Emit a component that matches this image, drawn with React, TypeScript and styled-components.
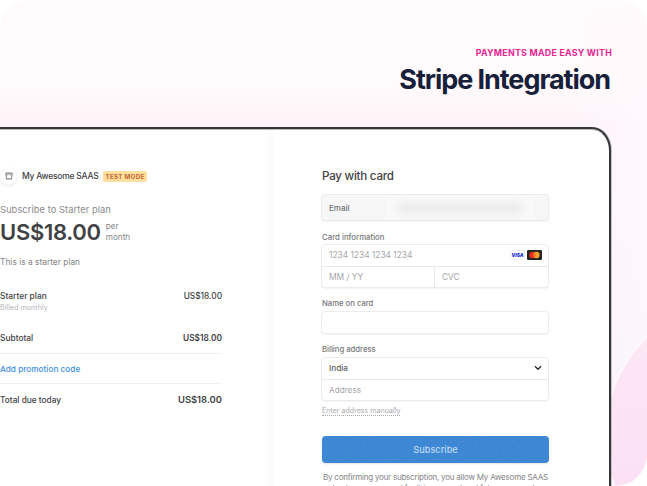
import React from "react";
import styled, { createGlobalStyle } from "styled-components";

const GlobalStyle = createGlobalStyle`
  * { box-sizing: border-box; }
  body { margin: 0; background: #fff; font-family: Inter, "Liberation Sans", sans-serif; }
`;

const Poster = styled.main`
  position: relative;
  width: 647px;
  height: 486px;
  overflow: hidden;
  border-radius: 28px 28px 32px 0;
  background:
    linear-gradient(90deg, rgba(255, 250, 253, 0) 88%, rgba(255, 249, 253, 0.75) 100%),
    linear-gradient(180deg, #fffbfc 0, #fffafc 85px, #fdf3f8 126px, #fcf4fa 220px, #f6f1fa 340px, #f5effa 486px);
`;

const Backdrop = styled.svg`
  position: absolute;
  inset: 0;
`;

const Heading = styled.header`
  position: relative;
  height: 127px;
  padding: 46px 35px 0 0;
  display: flex;
  flex-direction: column;
  align-items: flex-end;
`;

const Eyebrow = styled.p`
  margin: 0;
  height: 14px;
  font-size: 8.8px;
  line-height: 14px;
  font-weight: 700;
  letter-spacing: 0.28px;
  color: #e62593;
`;

const Title = styled.h1`
  margin: 0 2px 0 0;
  font-size: 27px;
  line-height: 39px;
  font-weight: 700;
  letter-spacing: -1.05px;
  color: #17203a;
`;

const Window = styled.section`
  position: relative;
  width: 611px;
  height: 359px;
  display: flex;
  border: solid #35363a;
  border-width: 2px 2px 0 0;
  border-top-right-radius: 19px 23px;
  background: #fff;
  box-shadow: 1px 0 0 #c9c5cb, inset 0 1px 0 #b9b9ba;
`;

const Summary = styled.div`
  width: 274px;
  margin-top: 1px;
  padding-top: 35px;
  background: linear-gradient(90deg, #fff 262px, #fbfbfb 274px);
`;

const Checkout = styled.div`
  width: 275px;
  padding: 38px 0 0 48px;
`;

const Text = styled.span<{ $size: number; $color?: string; $weight?: number; $spacing?: number; $line?: number }>`
  display: block;
  white-space: nowrap;
  font-size: ${(p) => p.$size}px;
  line-height: ${(p) => p.$line ?? 12}px;
  font-weight: ${(p) => p.$weight ?? 400};
  letter-spacing: ${(p) => p.$spacing ?? 0}px;
  color: ${(p) => p.$color ?? "#414244"};
`;

const Brand = styled.div`
  display: flex;
  align-items: center;
  height: 22px;
  margin-bottom: 16px;
`;

const Avatar = styled.div`
  width: 17px;
  height: 17px;
  margin-right: 5px;
  display: grid;
  place-items: center;
  border-radius: 50%;
  background: #fff;
  box-shadow: 0 1px 3px rgba(0, 0, 0, 0.11);
`;

const BrandName = styled.div`
  width: 81px;
`;

const TestBadge = styled.span`
  height: 11px;
  width: 44px;
  border-radius: 2px;
  background: #ffdf9e;
  color: #bd6630;
  font-size: 6.2px;
  font-weight: 700;
  line-height: 11px;
  letter-spacing: 0.3px;
  text-align: center;
  white-space: nowrap;
`;

const Price = styled.div`
  display: flex;
  gap: 5px;
  height: 30px;
  align-items: center;
  margin-bottom: 9px;
`;

const Line = styled.div<{ $height: number; $top?: number }>`
  display: flex;
  justify-content: space-between;
  align-items: center;
  width: 222px;
  height: ${(p) => p.$height}px;
  margin-top: ${(p) => p.$top ?? 0}px;
`;

const RuledLine = styled(Line)`
  border-top: 1px solid #f1f1f1;
`;

const Box = styled.div<{ $height: number; $muted?: boolean; $top?: number }>`
  width: 228px;
  height: ${(p) => p.$height}px;
  margin: ${(p) => p.$top ?? 0}px 0 0 -1px;
  display: flex;
  flex-direction: column;
  overflow: hidden;
  border: 1px solid #ececed;
  border-radius: 4px;
  background: ${(p) => (p.$muted ? "#f7f7f7" : "#fff")};
  box-shadow: 0 1px 1px rgba(0, 0, 0, 0.05);
`;

const Field = styled.div`
  flex: 1;
  display: flex;
  align-items: center;
  justify-content: space-between;
  padding: 0 6px 0 7px;
  & + & { border-top: 1px solid #e9e9ea; }
`;

const SplitField = styled.div`
  flex: 1;
  display: grid;
  grid-template-columns: 112px 1fr;
  border-top: 1px solid #e9e9ea;
`;

const Cell = styled.div`
  display: flex;
  align-items: center;
  padding-left: 7px;
  & + & { border-left: 1px solid #e9e9ea; }
`;

const HiddenEmail = styled.div`
  width: 148px;
  height: 23px;
  margin-right: 8px;
  display: grid;
  place-items: center;
  background: #f9f9f9;
  border-radius: 2px;
  &::after {
    content: "";
    width: 122px;
    height: 10px;
    background: #e9e9e9;
    filter: blur(4px);
  }
`;

const Label = styled.label<{ $top: number }>`
  display: block;
  height: 12px;
  margin: ${(p) => p.$top}px 0 2px;
`;

const Cards = styled.div`
  display: flex;
  gap: 2px;
`;

const ManualLink = styled.a`
  display: block;
  width: 78px;
  height: 10px;
  margin-top: 5px;
  border-bottom: 1px dotted #aaa;
`;

const SubscribeButton = styled.button`
  position: relative;
  display: block;
  width: 227px;
  height: 27px;
  margin: 20px 0 9px;
  padding: 0;
  overflow: hidden;
  border: 0;
  border-radius: 4px;
  background: #3685d6;
  box-shadow: 0 1px 2px rgba(0, 0, 0, 0.12);
  font-family: inherit;
`;

const Grain = styled.svg`
  position: absolute;
  inset: 0;
  opacity: 0.12;
`;

const Terms = styled.div`
  display: flex;
  flex-direction: column;
  align-items: center;
  width: 227px;
`;

const StoreIcon = () => (
  <svg width="8" height="8" viewBox="0 0 8 8" fill="none" stroke="#858585">
    <path d="M.7 1.1h6.6M1 6.8h6" strokeWidth="1.3" />
    <path d="M1.3 3.5v3.3M6.7 3.5v3.3M.9 1v2M7.1 1v2" strokeWidth="1" />
    <path d="M.5 3.2h1.8M5.7 3.2h1.8" strokeWidth="1" />
    <path d="M2 2.7h4" strokeWidth=".6" />
  </svg>
);

const VisaMark = () => (
  <svg width="15" height="10" viewBox="0 0 15 10">
    <rect x=".5" y=".5" width="14" height="9" rx="1" fill="#fff" stroke="#eee" />
    <text x="7.5" y="7" textAnchor="middle" textLength="12" lengthAdjust="spacingAndGlyphs" fontFamily="Inter" fontSize="5.4" fontWeight="900" fontStyle="italic" fill="#2636d7">VISA</text>
  </svg>
);

const MastercardMark = () => (
  <svg width="15" height="10" viewBox="0 0 15 10">
    <rect width="15" height="10" rx="1.2" fill="#252525" />
    <circle cx="5.5" cy="5" r="3.2" fill="#eb2b20" />
    <circle cx="9.4" cy="5" r="3.2" fill="#f3a42e" />
    <path d="M7.45 2.5a3.2 3.2 0 0 1 0 5a3.2 3.2 0 0 1 0-5Z" fill="#f36a20" />
  </svg>
);

const Chevron = () => (
  <svg width="8" height="6" viewBox="0 0 8 6" fill="none" stroke="#252525" strokeWidth="1.3">
    <path d="m1 1.3 3 3 3-3" />
  </svg>
);

export default function App() {
  return (
    <>
      <GlobalStyle />
      <Poster>
        <Backdrop width="647" height="486" viewBox="0 0 647 486">
          <defs>
            <linearGradient id="orb" x1="0" y1="0" x2="0" y2="1">
              <stop offset="0.15" stopColor="#fce7f5" />
              <stop offset="0.7" stopColor="#fbe0f6" />
            </linearGradient>
          </defs>
          <circle cx="743" cy="436" r="138" fill="url(#orb)" stroke="#fff7fc" strokeWidth="2" />
        </Backdrop>
        <Heading>
          <Eyebrow>PAYMENTS MADE EASY WITH</Eyebrow>
          <Title>Stripe Integration</Title>
        </Heading>
        <Window>
          <Summary>
            <Brand>
              <Avatar><StoreIcon /></Avatar>
              <BrandName><Text $size={8.5} $weight={500} $spacing={-0.23}>My Awesome SAAS</Text></BrandName>
              <TestBadge>TEST MODE</TestBadge>
            </Brand>
            <Text $size={9.4} $line={14} $spacing={0.03} $color="#8b8b8c">Subscribe to Starter plan</Text>
            <Price>
              <Text $size={22} $line={30} $weight={600} $spacing={-0.3}>US$18.00</Text>
              <Text $size={8.2} $line={11} $color="#858586">per<br />month</Text>
            </Price>
            <Text $size={8.4} $color="#858586">This is a starter plan</Text>
            <Line $height={12} $top={22}>
              <Text $size={8.4} $weight={500}>Starter plan</Text>
              <Text $size={8.3} $weight={500}>US$18.00</Text>
            </Line>
            <Line $height={10} $top={1}>
              <Text $size={7.1} $line={10} $spacing={0.04} $color="#b4b4b4">Billed monthly</Text>
            </Line>
            <Line $height={30} $top={10}>
              <Text $size={8.4} $weight={500}>Subtotal</Text>
              <Text $size={8.3} $weight={600}>US$18.00</Text>
            </Line>
            <RuledLine $height={30}>
              <Text $size={8.2} $weight={500} $spacing={0.03} $color="#4490de">Add promotion code</Text>
            </RuledLine>
            <RuledLine $height={33}>
              <Text $size={8.3} $weight={500}>Total due today</Text>
              <Text $size={9.4} $weight={600}>US$18.00</Text>
            </RuledLine>
          </Summary>
          <Checkout>
            <Text $size={11.6} $line={18} $weight={500} $spacing={-0.25}>Pay with card</Text>
            <Box $height={27} $top={9} $muted>
              <Field>
                <Text $size={8} $color="#707071" $weight={500}>Email</Text>
                <HiddenEmail />
              </Field>
            </Box>
            <Label $top={10}><Text $size={7.8} $weight={500} $color="#777778">Card information</Text></Label>
            <Box $height={44} $top={-1}>
              <Field>
                <Text $size={8.4} $color="#a6a6a8">1234 1234 1234 1234</Text>
                <Cards><VisaMark /><MastercardMark /></Cards>
              </Field>
              <SplitField>
                <Cell><Text $size={8.4} $color="#a6a6a8">MM / YY</Text></Cell>
                <Cell><Text $size={8.4} $color="#a6a6a8">CVC</Text></Cell>
              </SplitField>
            </Box>
            <Label $top={10}><Text $size={7.7} $weight={500} $color="#777778">Name on card</Text></Label>
            <Box $height={23} $top={-1} />
            <Label $top={10}><Text $size={7.7} $weight={500} $color="#777778">Billing address</Text></Label>
            <Box $height={44} $top={-1}>
              <Field><Text $size={8.2} $weight={500} $color="#606062">India</Text><Chevron /></Field>
              <Field><Text $size={8.2} $color="#a6a6a8">Address</Text></Field>
            </Box>
            <ManualLink><Text $size={7.1} $line={10} $color="#aaaaab">Enter address manually</Text></ManualLink>
            <SubscribeButton>
              <Grain width="227" height="27">
                <filter id="grain"><feTurbulence type="fractalNoise" baseFrequency="0.55" numOctaves="2" seed="4" /><feColorMatrix type="saturate" values="0" /></filter>
                <rect width="227" height="27" filter="url(#grain)" />
              </Grain>
              <Text $size={9.2} $line={27} $weight={500} $color="#bfdcf8">Subscribe</Text>
            </SubscribeButton>
            <Terms>
              <Text $size={8} $line={11} $spacing={-0.22} $color="#858586">By confirming your subscription, you allow My Awesome SAAS</Text>
              <Text $size={8} $line={11} $spacing={-0.22} $color="#858586">to charge your card for this payment and future payments</Text>
            </Terms>
          </Checkout>
        </Window>
      </Poster>
    </>
  );
}
